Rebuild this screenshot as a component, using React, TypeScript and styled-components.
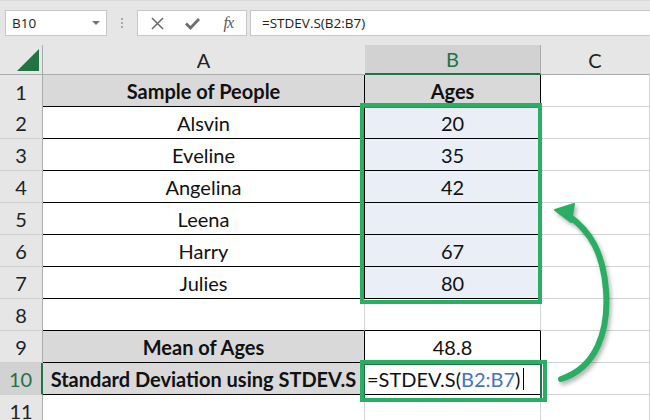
import React, { ReactNode } from 'react'
import styled, { createGlobalStyle } from 'styled-components'

const green = '#2aae64'
const excelGreen = '#217346'
const grid = '#d4d4d4'
const headerLine = '#ababab'

type Tone = 'plain' | 'head' | 'sel'
type CellData = { text?: ReactNode; bold?: boolean; tone?: Tone; right?: boolean; bottom?: boolean; left?: boolean }
type RowData = { n: number; a: CellData; b: CellData; active?: boolean; tall?: boolean }

const Formula = () => (
  <>
    =STDEV.S(<Ref>B2:B7</Ref>)<Caret />
  </>
)

const rows: RowData[] = [
  { n: 1, tall: true, a: { text: 'Sample of People', bold: true, tone: 'head', right: true, bottom: true }, b: { text: 'Ages', bold: true, tone: 'head', right: true, bottom: true } },
  { n: 2, a: { text: 'Alsvin', right: true, bottom: true }, b: { text: '20', tone: 'sel', right: true, bottom: true } },
  { n: 3, a: { text: 'Eveline', right: true, bottom: true }, b: { text: '35', tone: 'sel', right: true, bottom: true } },
  { n: 4, a: { text: 'Angelina', right: true, bottom: true }, b: { text: '42', tone: 'sel', right: true, bottom: true } },
  { n: 5, a: { text: 'Leena', right: true, bottom: true }, b: { text: '', tone: 'sel', right: true, bottom: true } },
  { n: 6, a: { text: 'Harry', right: true, bottom: true }, b: { text: '67', tone: 'sel', right: true, bottom: true } },
  { n: 7, a: { text: 'Julies', right: true, bottom: true }, b: { text: '80', tone: 'sel', right: true, bottom: true } },
  { n: 8, a: { bottom: true }, b: { bottom: true } },
  { n: 9, a: { text: 'Mean of Ages', bold: true, tone: 'head', right: true, bottom: true }, b: { text: '48.8', right: true, bottom: true } },
  { n: 10, active: true, a: { text: 'Standard Deviation using STDEV.S', bold: true, tone: 'head', right: true, bottom: true }, b: { text: <Formula />, left: true, right: true, bottom: true } },
  { n: 11, a: {}, b: {} },
]

export default function App() {
  return (
    <Page>
      <GlobalStyle />
      <Toolbar>
        <NameBox>
          B10
          <Caret2 />
        </NameBox>
        <Grip>
          <i />
          <i />
          <i />
        </Grip>
        <IconBox>
          <IconSlot>
            <svg width="13" height="13" viewBox="0 0 13 13">
              <path d="M1 1 L12 12 M12 1 L1 12" stroke="#6e6e6e" strokeWidth="1.6" fill="none" />
            </svg>
          </IconSlot>
          <IconSlot>
            <svg width="15" height="13" viewBox="0 0 15 13">
              <path d="M1 6.5 L5.5 11 L14 2" stroke="#6e6e6e" strokeWidth="2.8" fill="none" />
            </svg>
          </IconSlot>
          <IconSlot>
            <Fx>fx</Fx>
          </IconSlot>
        </IconBox>
        <FormulaInput>=STDEV.S(B2:B7)</FormulaInput>
      </Toolbar>

      <Sheet>
        <Corner>
          <Triangle />
        </Corner>
        <ColHead>A</ColHead>
        <ColHead $selected>B</ColHead>
        <ColHead>C</ColHead>

        {rows.map((r) => (
          <React.Fragment key={r.n}>
            <RowHead $active={r.active} $tall={r.tall}>{r.n}</RowHead>
            <Cell $bold={r.a.bold} $tone={r.a.tone} $right={r.a.right} $bottom={r.a.bottom}>
              {r.a.text}
            </Cell>
            <Cell $bold={r.b.bold} $tone={r.b.tone} $right={r.b.right} $bottom={r.b.bottom} $left={r.b.left}>
              {r.b.text}
            </Cell>
            <Cell />
          </React.Fragment>
        ))}
      </Sheet>

      <RangeRef />
      <Mark $x={360} $y={103} $w={182} $h={201} />
      <ActiveBorder />
      <Mark $x={360} $y={360} $w={187} $h={42} />
      <Arrow width="650" height="420" viewBox="0 0 650 420">
        <path d="M561 379 C596 368 609 332 606 290 C603 253 591 232 569 216" stroke={green} strokeWidth="6" fill="none" strokeLinecap="round" />
        <path d="M555 210 L574 204 L571 222 Z" fill={green} stroke={green} strokeWidth="2" strokeLinejoin="round" />
      </Arrow>
    </Page>
  )
}

const GlobalStyle = createGlobalStyle`
  html, body {
    margin: 0;
    padding: 0;
    background: #fff;
  }
  body {
    font-family: 'Lato', 'Liberation Sans', sans-serif;
    color: #111;
  }
`

const Page = styled.div`
  position: relative;
  width: 650px;
  height: 420px;
  overflow: hidden;
`

const Toolbar = styled.div`
  height: 45px;
  box-sizing: border-box;
  padding: 9px 0 0 5px;
  display: flex;
  align-items: flex-start;
  background: #e6e6e6;
  border-top: 1px solid #dadada;
`

const Box = styled.div`
  height: 26px;
  box-sizing: border-box;
  background: #fff;
  border: 1px solid #c6c6c6;
  display: flex;
  align-items: center;
  font-family: 'Open Sans', 'Noto Sans', sans-serif;
  font-size: 13.5px;
  color: #222;
`

const NameBox = styled(Box)`
  width: 102px;
  padding: 0 6px;
  justify-content: space-between;
`

const Caret2 = styled.span`
  width: 0;
  height: 0;
  border-left: 4px solid transparent;
  border-right: 4px solid transparent;
  border-top: 4px solid #777;
`

const Grip = styled.div`
  width: 30px;
  height: 26px;
  display: flex;
  flex-direction: column;
  align-items: center;
  justify-content: center;
  gap: 2px;

  i {
    width: 2px;
    height: 2px;
    background: #a8a8a8;
  }
`

const IconBox = styled(Box)`
  width: 110px;
  padding-left: 2px;
  margin-right: 3px;
`

const IconSlot = styled.div`
  width: 36px;
  display: flex;
  justify-content: center;
  align-items: center;
`

const Fx = styled.span`
  font-family: 'Liberation Serif', serif;
  font-style: italic;
  font-size: 16px;
  color: #5a5a5a;
  letter-spacing: -1px;
`

const FormulaInput = styled(Box)`
  flex: 1;
  padding-left: 11px;
  border-right: none;
`

const Sheet = styled.div`
  display: grid;
  grid-template-columns: 43px 322px 176px 1fr;
  grid-auto-rows: 32px;
  grid-template-rows: 30px;
`

const Corner = styled.div`
  background: #e6e6e6;
  border-right: 1px solid ${headerLine};
  border-bottom: 1px solid ${headerLine};
  display: flex;
  align-items: flex-end;
  justify-content: flex-end;
  padding: 0 3px 3px 0;
`

const Triangle = styled.span`
  width: 0;
  height: 0;
  border-left: 22px solid transparent;
  border-bottom: 22px solid ${excelGreen};
`

const ColHead = styled.div<{ $selected?: boolean }>`
  display: flex;
  align-items: center;
  justify-content: center;
  font-size: 20px;
  background: ${(p) => (p.$selected ? '#d2d2d2' : '#e6e6e6')};
  color: ${(p) => (p.$selected ? excelGreen : '#222')};
  border-right: 1px solid ${(p) => (p.$selected ? headerLine : 'transparent')};
  border-bottom: ${(p) => (p.$selected ? `2px solid ${excelGreen}` : `1px solid ${headerLine}`)};
`

const RowHead = styled.div<{ $active?: boolean; $tall?: boolean }>`
  display: flex;
  align-items: center;
  justify-content: center;
  font-size: 20px;
  height: ${(p) => (p.$tall ? '34px' : '32px')};
  box-sizing: border-box;
  background: ${(p) => (p.$active ? '#d2d2d2' : '#e6e6e6')};
  color: ${(p) => (p.$active ? excelGreen : '#222')};
  border-right: ${(p) => (p.$active ? `2px solid ${excelGreen}` : `1px solid ${headerLine}`)};
  border-bottom: 1px solid #cfcfcf;
`

const toneFill: Record<Tone, string> = {
  plain: '#fff',
  head: '#d9d9d9',
  sel: '#e9eef7',
}

const Cell = styled.div<{ $bold?: boolean; $tone?: Tone; $right?: boolean; $bottom?: boolean; $left?: boolean }>`
  display: flex;
  align-items: center;
  justify-content: ${(p) => (p.$left ? 'flex-start' : 'center')};
  padding-left: ${(p) => (p.$left ? '2px' : '0')};
  box-sizing: border-box;
  white-space: nowrap;
  font-size: 20px;
  font-weight: ${(p) => (p.$bold ? 700 : 400)};
  background: ${(p) => toneFill[p.$tone ?? 'plain']};
  border-right: 1px solid ${(p) => (p.$right ? '#000' : grid)};
  border-bottom: 1px solid ${(p) => (p.$bottom ? '#000' : grid)};
`

const Ref = styled.span`
  color: #4472c4;
`

const Caret = styled.span`
  display: inline-block;
  width: 1px;
  height: 22px;
  margin-left: 3px;
  background: #000;
`

const RangeRef = styled.div`
  position: absolute;
  left: 363px;
  top: 107px;
  width: 178px;
  height: 195px;
  border: 1px solid #4472c4;
  box-sizing: border-box;
`

const Mark = styled.div<{ $x: number; $y: number; $w: number; $h: number }>`
  position: absolute;
  left: ${(p) => p.$x}px;
  top: ${(p) => p.$y}px;
  width: ${(p) => p.$w}px;
  height: ${(p) => p.$h}px;
  box-sizing: border-box;
  border: 4px solid ${green};
`

const ActiveBorder = styled.div`
  position: absolute;
  left: 363px;
  top: 363px;
  width: 179px;
  height: 37px;
  box-sizing: border-box;
  border: 2px solid ${excelGreen};
`

const Arrow = styled.svg`
  position: absolute;
  left: 0;
  top: 0;
  pointer-events: none;
  filter: drop-shadow(2px 3px 2px rgba(0, 0, 0, 0.3));
`
